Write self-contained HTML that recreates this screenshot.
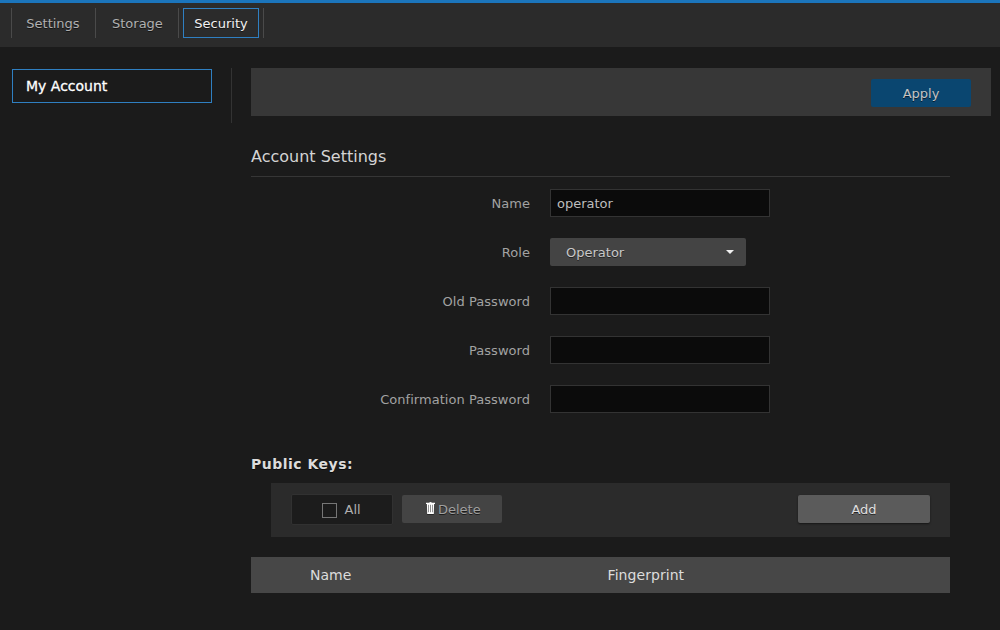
<!DOCTYPE html>
<html>
<head>
<meta charset="utf-8">
<title>Security</title>
<style>
html,body{margin:0;padding:0;}
body{width:1000px;height:630px;overflow:hidden;background:#1b1b1b;font-family:"DejaVu Sans","Liberation Sans",sans-serif;font-size:13px;color:#b4b4b4;position:relative;}
*{box-sizing:border-box;}
.abs{position:absolute;}
#topblue{left:0;top:0;width:1000px;height:3px;background:#1b75bc;}
#nav{left:0;top:3px;width:1000px;height:44px;background:#2b2b2b;}
.sep{width:1px;top:8px;height:30px;background:#4a4a4a;}
.tab{top:8px;height:30px;line-height:31px;font-size:13px;color:#b0b0b0;white-space:nowrap;text-shadow:0 1px 0 rgba(0,0,0,.55);}
#tabsec{left:183px;width:76px;border:1px solid #2f7fc1;color:#f2f2f2;text-align:center;line-height:29px;}
#myacc{left:12px;top:69px;width:200px;height:34px;border:1px solid #2f7fc1;color:#fff;font-size:14px;line-height:33px;padding-left:13px;-webkit-text-stroke:0.3px #fff;}
#vsep{left:231px;top:68px;width:1px;height:55px;background:#333;}
#toolbar{left:251px;top:68px;width:740px;height:48px;background:#373737;}
#apply{left:871px;top:79px;width:100px;height:28px;background:#0a4670;border-radius:2px;color:#c4c4c4;text-align:center;line-height:29px;font-size:13px;text-shadow:0 1px 0 rgba(0,0,0,.6);}
#h1{left:251px;top:147px;font-size:16px;color:#d4d4d4;white-space:nowrap;}
#hr{left:251px;top:176px;width:699px;height:1px;background:#363636;}
.lbl{left:300px;width:230px;text-align:right;font-size:13px;letter-spacing:0.04px;color:#a2a2a2;white-space:nowrap;height:30px;line-height:30px;}
.inp{left:550px;width:220px;height:28px;background:#0b0b0b;border:1px solid #333;color:#bdbdbd;line-height:28px;padding-left:6px;font-size:13px;}
#sel{left:550px;top:238px;width:196px;height:28px;background:#444;border-radius:2px;color:#c8c8c8;line-height:30px;padding-left:16px;font-size:13px;text-shadow:0 1px 0 rgba(0,0,0,.5);}
#caret{left:726px;top:250px;width:0;height:0;border-left:4px solid transparent;border-right:4px solid transparent;border-top:4px solid #f0f0f0;}
#pk{left:251px;top:456px;font-weight:bold;font-size:14px;letter-spacing:0.5px;color:#dcdcdc;white-space:nowrap;text-shadow:0 1px 0 rgba(0,0,0,.6);}
#pkbar{left:271px;top:483px;width:679px;height:54px;background:#2b2b2b;}
#allbox{left:291px;top:494px;width:102px;height:31px;background:#1c1c1c;border:1px solid #313131;border-radius:2px;}
#chk{left:322px;top:503px;width:15px;height:15px;border:1px solid #767676;background:#1b1b1b;}
#alltxt{left:344.5px;top:495px;line-height:30px;font-size:13px;color:#b0b0b0;}
#del{left:402px;top:495px;width:100px;height:28px;background:#444;border-radius:2px;color:#a0a0a0;line-height:30px;font-size:13px;text-shadow:0 1px 0 rgba(0,0,0,.6);}
#deltxt{left:36px;top:0;}
#add{left:798px;top:495px;width:132px;height:28px;background:#5b5b5b;border-radius:2px;color:#e0e0e0;text-align:center;line-height:30px;font-size:13px;box-shadow:0 1px 2px rgba(0,0,0,.5);text-shadow:0 1px 0 rgba(0,0,0,.6);}
#thead{left:251px;top:557px;width:699px;height:36px;background:#474747;}
.th{top:0;line-height:37px;font-size:14px;color:#dcdcdc;white-space:nowrap;}
</style>
</head>
<body>
<div class="abs" id="topblue"></div>
<div class="abs" id="nav"></div>
<div class="abs sep" style="left:11px"></div>
<div class="abs tab" style="left:26.300px">Settings</div>
<div class="abs sep" style="left:95px"></div>
<div class="abs tab" style="left:112px">Storage</div>
<div class="abs sep" style="left:178px"></div>
<div class="abs tab" id="tabsec">Security</div>
<div class="abs sep" style="left:263px"></div>

<div class="abs" id="myacc">My Account</div>
<div class="abs" id="vsep"></div>
<div class="abs" id="toolbar"></div>
<div class="abs" id="apply">Apply</div>

<div class="abs" id="h1">Account Settings</div>
<div class="abs" id="hr"></div>

<div class="abs lbl" style="top:189px">Name</div>
<div class="abs inp" style="top:189px">operator</div>
<div class="abs lbl" style="top:238px">Role</div>
<div class="abs" id="sel">Operator</div>
<div class="abs" id="caret"></div>
<div class="abs lbl" style="top:287px">Old Password</div>
<div class="abs inp" style="top:287px"></div>
<div class="abs lbl" style="top:336px">Password</div>
<div class="abs inp" style="top:336px"></div>
<div class="abs lbl" style="top:385px">Confirmation Password</div>
<div class="abs inp" style="top:385px"></div>

<div class="abs" id="pk">Public Keys:</div>
<div class="abs" id="pkbar"></div>
<div class="abs" id="allbox"></div>
<div class="abs" id="chk"></div>
<div class="abs" id="alltxt">All</div>
<div class="abs" id="del"><svg class="abs" style="left:24px;top:7px;overflow:visible" width="9" height="13" viewBox="0 0 9 13"><path d="M1.200 12H7.800V12.900H1.200z" fill="#000" opacity=".45"/><path d="M0 .7H3Q4.500 -.5 6 .7H9V2H8.100L7.800 12H1.200L.9 2H0zM2.200 2.800V10.300H2.750V2.800zM4.200 2.800V10.300H4.800V2.800zM6.250 2.800V10.300H6.800V2.800z" fill="#ffffff" fill-rule="evenodd"/></svg><span class="abs" id="deltxt">Delete</span></div>
<div class="abs" id="add">Add</div>

<div class="abs" id="thead">
<span class="abs th" style="left:59px">Name</span>
<span class="abs th" style="left:356.600px;letter-spacing:0.05px">Fingerprint</span>
</div>
</body>
</html>
